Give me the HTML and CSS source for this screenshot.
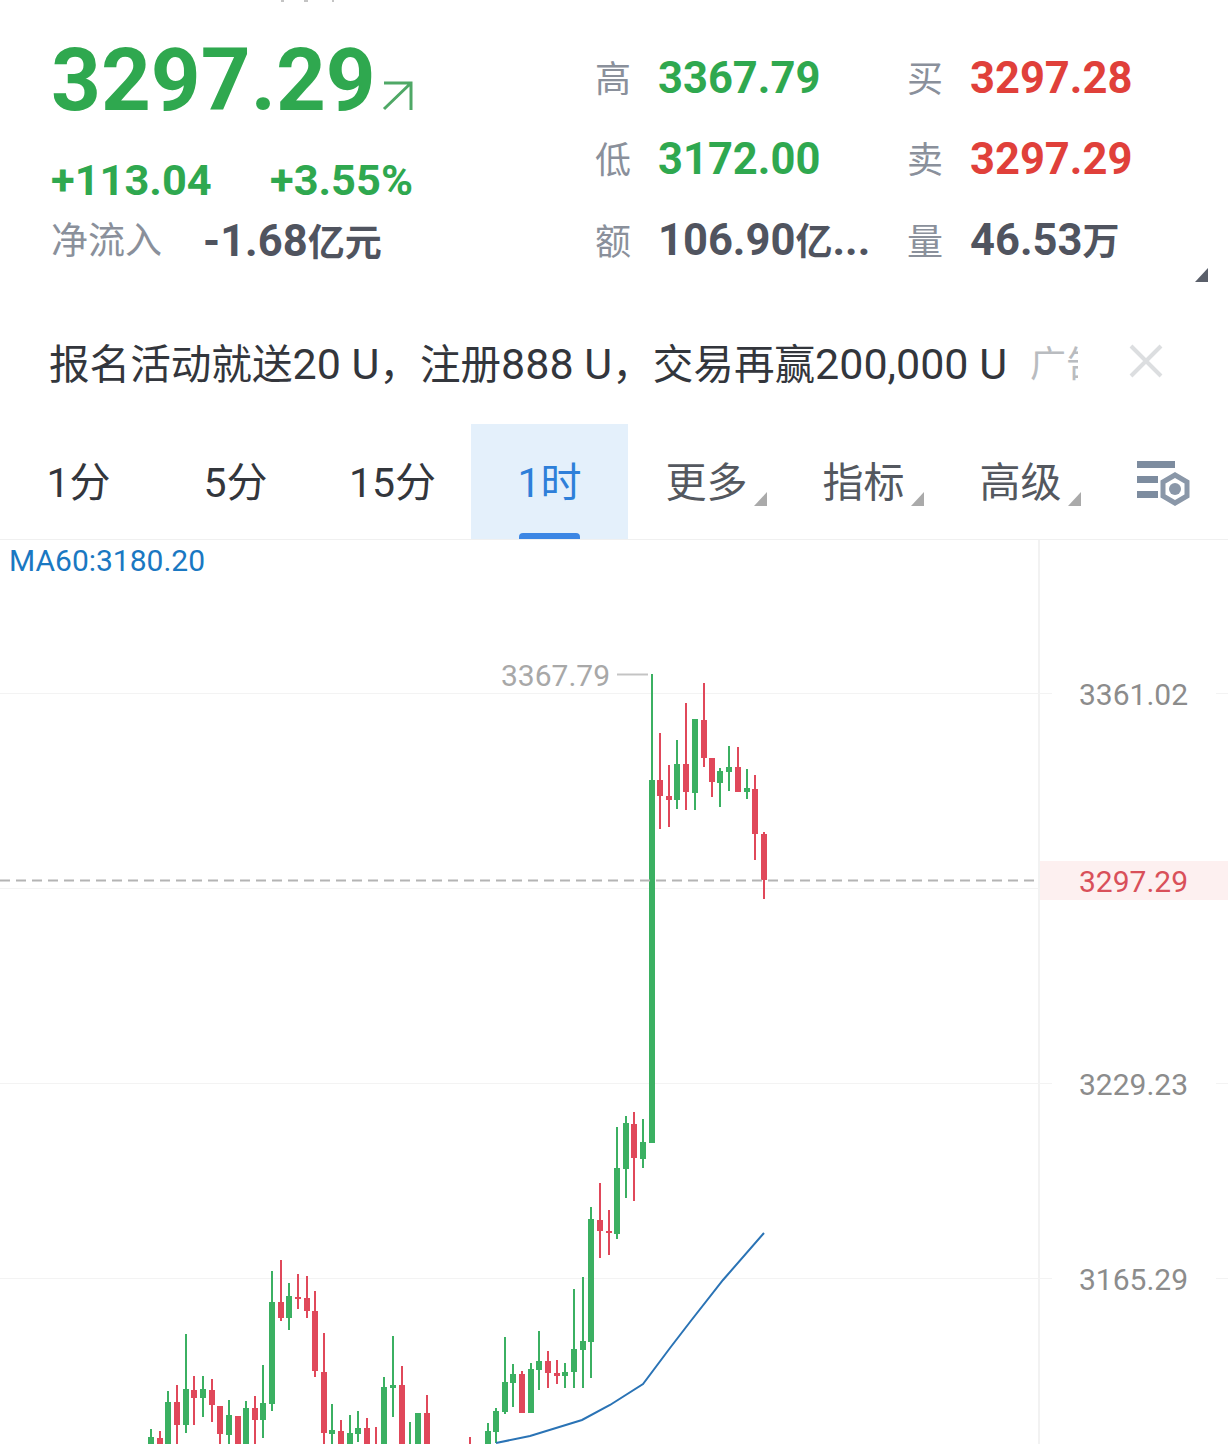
FILE: index.html
```html
<!DOCTYPE html>
<html>
<head>
<meta name="viewport" content="width=device-width, initial-scale=1">
<title>BTC</title>
<link rel="stylesheet" href="styles.css">
</head>
<body>
<div class="quote">
  <svg class="cut-title" width="60" height="2" viewBox="0 0 60 2">
    <rect x="0" y="0" width="3" height="2" fill="#c4c4c4"/>
    <rect x="23" y="0" width="4" height="2" fill="#c4c4c4"/>
    <rect x="51" y="0" width="2" height="2" fill="#c4c4c4"/>
  </svg>
  <div class="summary">
    <div class="last">
      <span class="last-price">3297.29</span>
      <svg class="last-arrow" width="32" height="30" viewBox="0 0 32 30"><path d="M2 28 L29 2 M2 2 H29 V29" fill="none" stroke="#4fa866" stroke-width="3"/></svg>
    </div>
    <div class="change">
      <span class="change-abs">+113.04</span>
      <span>+3.55%</span>
    </div>
    <div class="flow">
      <span class="flow-label">净流入</span>
      <span class="flow-value">-1.68<span class="unit">亿元</span></span>
    </div>
  </div>
  <div class="stats">
    <span class="stat-label">高</span><span class="stat up">3367.79</span>
    <span class="stat-label">买</span><span class="stat down">3297.28</span>
    <span class="stat-label">低</span><span class="stat up">3172.00</span>
    <span class="stat-label">卖</span><span class="stat down">3297.29</span>
    <span class="stat-label">额</span><span class="stat dark">106.90<span class="unit">亿</span>...</span>
    <span class="stat-label">量</span><span class="stat dark">46.53<span class="unit">万</span></span>
  </div>
  <div class="corner"></div>
</div>

<div class="ad">
  <span class="ad-text">报名活动就送<span class="ad-num">20 U</span>，注册<span class="ad-num">888 U</span>，交易再赢<span class="ad-num">200,000 U</span></span>
  <span class="ad-tag"><span>广告</span></span>
  <svg class="ad-close" width="34" height="34" viewBox="0 0 34 34"><path d="M2 2 L32 32 M32 2 L2 32" stroke="#dcdee0" stroke-width="4"/></svg>
</div>

<div class="tabs">
  <a class="tab">1分</a>
  <a class="tab">5分</a>
  <a class="tab">15分</a>
  <a class="tab active">1时</a>
  <a class="tab dark drop">更多</a>
  <a class="tab dark drop">指标</a>
  <a class="tab dark drop">高级</a>
  <svg class="tab-icon" width="54" height="46" viewBox="0 0 54 46">
    <rect x="0" y="0" width="38" height="7" fill="#7d8c9f"/>
    <rect x="0" y="15" width="21" height="7" fill="#7d8c9f"/>
    <rect x="0" y="30" width="21" height="7" fill="#7d8c9f"/>
    <path d="M38 14 L50 21 V35 L38 42 L26 35 V21 Z" fill="#fff" stroke="#8a97a8" stroke-width="5"/>
    <circle cx="38" cy="28" r="6" fill="#8a97a8"/>
  </svg>
</div>

<svg id="chart" class="chart" width="1228" height="904" viewBox="0 540 1228 904">
  <rect x="1039" y="861" width="189" height="39" fill="#fdf0f0"/>
  <line x1="1039" y1="540" x2="1039" y2="1444" stroke="#f2f2f2" stroke-width="2"/>
  <g stroke="#f3f3f3">
    <line x1="0" y1="693.5" x2="1052" y2="693.5"/>
    <line x1="1216" y1="693.5" x2="1228" y2="693.5"/>
    <line x1="0" y1="888.5" x2="1039" y2="888.5"/>
    <line x1="0" y1="1083.5" x2="1052" y2="1083.5"/>
    <line x1="1216" y1="1083.5" x2="1228" y2="1083.5"/>
    <line x1="0" y1="1278.5" x2="1052" y2="1278.5"/>
    <line x1="1216" y1="1278.5" x2="1228" y2="1278.5"/>
  </g>
  <g id="candles"></g>
  <line x1="0" y1="880.5" x2="1036" y2="880.5" stroke="#b4b4b4" stroke-width="2" stroke-dasharray="10 6"/>
  <path d="M496 1443 L530 1436 L582 1420 L610 1405 L643 1384 L670 1348 L690 1322 L723 1280 L764 1233" fill="none" stroke="#2a73b5" stroke-width="2"/>
  <line x1="617" y1="674.5" x2="648" y2="674.5" stroke="#c4c4c4" stroke-width="2"/>
  <text class="ma" x="9" y="571">MA60:3180.20</text>
  <text class="high-mark" x="501" y="686">3367.79</text>
  <text class="axis" x="1079" y="705">3361.02</text>
  <text class="axis now" x="1079" y="892">3297.29</text>
  <text class="axis" x="1079" y="1095">3229.23</text>
  <text class="axis" x="1079" y="1290">3165.29</text>
</svg>
<script src="chart.js"></script>
</body>
</html>
```

FILE: styles.css
```css
body {
  margin: 0;
  width: 1228px;
  height: 1444px;
  overflow: hidden;
  background: #fff;
  font-family: Roboto, "Noto Sans CJK SC", sans-serif;
}

.quote {
  position: relative;
  display: flex;
  height: 300px;
  padding-left: 51px;
  box-sizing: border-box;
}

.cut-title {
  position: absolute;
  left: 281px;
  top: 0;
}

.summary {
  width: 544px;
  padding-top: 30px;
  box-sizing: border-box;
}

.last {
  display: flex;
  align-items: flex-end;
  height: 100px;
}

.last-price {
  font-size: 87px;
  line-height: 100px;
  font-weight: 700;
  color: #2fa84f;
}

.last-arrow {
  margin: 0 0 19px 6px;
}

.change {
  display: flex;
  margin-top: 29px;
  font-size: 43.4px;
  line-height: 44px;
  font-weight: 700;
  color: #2fa84f;
}

.change-abs {
  width: 219px;
}

.flow {
  display: flex;
  margin-top: 17px;
  line-height: 44px;
}

.flow-label {
  width: 152px;
  font-size: 37px;
  color: #8a909b;
}

.flow-value {
  font-size: 43.5px;
  font-weight: 700;
  color: #50545f;
}

.unit {
  font-size: 37px;
}

.stats {
  display: grid;
  grid-template-columns: 63px 249px 63px 1fr;
  grid-auto-rows: 81.5px;
  align-items: center;
  padding-top: 38px;
}

.stat-label {
  margin-top: 2px;
  font-size: 36px;
  line-height: 44px;
  color: #8a909b;
}

.stat {
  font-size: 43.5px;
  line-height: 44px;
  font-weight: 700;
  white-space: nowrap;
}

.stat.up {
  color: #2fa84f;
}

.stat.down {
  color: #e0403a;
}

.stat.dark {
  color: #50545f;
}

.corner {
  position: absolute;
  left: 1195px;
  top: 268px;
  border-style: solid;
  border-width: 0 0 14px 13px;
  border-color: transparent transparent #5a5f6a transparent;
}

.ad {
  display: flex;
  align-items: center;
  height: 122px;
  margin-bottom: 2px;
  padding-left: 49px;
  box-sizing: border-box;
  font-size: 40.6px;
  color: #33363c;
}

.ad-text {
  white-space: nowrap;
}

.ad-num {
  font-size: 43px;
}

.ad-tag {
  width: 48px;
  margin-left: 23px;
  overflow: hidden;
  white-space: nowrap;
  font-size: 36px;
  color: #b9bcc0;
}

.ad-close {
  margin-left: 51px;
}

.tabs {
  position: relative;
  display: flex;
  height: 116px;
  border-bottom: 1px solid #f0f0f0;
  box-sizing: border-box;
}

.tab {
  position: relative;
  flex: 0 0 157px;
  text-align: center;
  font-size: 41px;
  line-height: 119px;
  color: #33363c;
}

.tab.dark {
  color: #54585f;
}

.tab.active {
  background: #e4f0fb;
  color: #2e7fd9;
}

.tab.active::after {
  content: "";
  position: absolute;
  left: 48px;
  bottom: 0;
  width: 61px;
  height: 6px;
  border-radius: 4px 4px 0 0;
  background: #3b86e4;
}

.tab.drop::after {
  content: "";
  position: absolute;
  right: 18px;
  bottom: 33px;
  border-style: solid;
  border-width: 0 0 14px 13px;
  border-color: transparent transparent #aaaaaa transparent;
}

.tab-icon {
  position: absolute;
  left: 1137px;
  top: 37px;
}

.chart {
  display: block;
}

.chart text {
  font-family: Roboto, sans-serif;
}

.ma {
  font-size: 30px;
  fill: #1a78c2;
}

.high-mark {
  font-size: 30px;
  fill: #a8a8a8;
}

.axis {
  font-size: 30px;
  fill: #8c8c8c;
}

.axis.now {
  fill: #d9505a;
}
```

FILE: chart.js
```js
// x, wick top, wick bottom, body top, body bottom, 1 = up (green) / 0 = down (red)
var B = 1444;
var candles = [
  [151,1429,B,1437,B,1],[160,1431,B,1438,B,0],[168,1391,B,1402,B,1],[177,1385,B,1402,1425,0],
  [186,1334,1433,1389,1425,1],[194,1376,1425,1390,1398,0],[203,1376,1417,1389,1398,1],[212,1379,1422,1390,1405,0],
  [220,1406,B,1406,1434,0],[229,1400,B,1415,1435,1],[238,1416,B,1416,B,0],[246,1401,B,1408,B,1],
  [255,1396,B,1408,1420,0],[263,1365,1438,1403,1420,1],[272,1271,1411,1302,1404,1],[281,1260,1321,1302,1318,0],
  [289,1283,1330,1296,1318,1],[298,1274,1309,1297,1299,0],[307,1276,1318,1298,1311,0],[315,1291,1377,1311,1371,0],
  [324,1333,B,1372,1433,0],[332,1404,B,1430,1434,1],[341,1420,B,1431,B,0],[350,1415,B,1433,B,1],
  [358,1411,1442,1428,1434,1],[367,1418,B,1428,B,0],[376,1427,B,B,B,0],[384,1377,B,1387,B,1],
  [393,1336,1417,1385,1388,1],[402,1366,B,1385,B,0],[410,1422,B,B,B,1],[418,1413,B,1413,B,1],
  [427,1395,B,1413,B,0],
  [470,1437,B,B,B,0],[488,1423,B,1431,B,1],[496,1408,1443,1411,1432,1],[505,1337,1414,1382,1412,1],
  [513,1364,1407,1374,1383,1],[522,1371,1413,1374,1413,0],[531,1363,1413,1369,1413,1],[539,1331,1390,1361,1370,1],
  [548,1351,1388,1361,1373,0],[557,1360,1384,1373,1376,0],[565,1363,1388,1372,1376,1],[574,1289,1388,1349,1372,1],
  [583,1277,1388,1341,1350,1],[591,1207,1378,1219,1342,1],[600,1183,1258,1220,1231,0],[609,1210,1255,1231,1233,0],
  [617,1127,1239,1168,1234,1],[626,1116,1198,1123,1169,1],[634,1112,1201,1124,1158,0],[643,1119,1168,1142,1159,1],
  [652,674,1143,780,1143,1],[660,733,829,780,796,0],[669,765,827,796,800,0],[677,740,809,764,800,1],
  [686,703,810,764,792,0],[695,719,810,719,793,1],[704,683,767,720,758,0],[712,758,797,758,782,0],
  [720,768,807,771,783,1],[729,746,791,767,772,1],[738,747,792,767,792,0],[747,769,799,788,792,1],
  [755,775,860,789,834,0],[764,832,899,834,880,0]
];

var NS = "http://www.w3.org/2000/svg";
var group = document.getElementById("candles");

function addRect(x, y, w, h, color) {
  var r = document.createElementNS(NS, "rect");
  r.setAttribute("x", x);
  r.setAttribute("y", y);
  r.setAttribute("width", w);
  r.setAttribute("height", h);
  r.setAttribute("fill", color);
  group.appendChild(r);
}

candles.forEach(function (c) {
  var color = c[5] ? "#3bb062" : "#e0485a";
  addRect(c[0] - 1, c[1], 2, c[2] - c[1], color);
  if (c[4] > c[3]) {
    addRect(c[0] - 3, c[3], 6, c[4] - c[3], color);
  }
});
```
